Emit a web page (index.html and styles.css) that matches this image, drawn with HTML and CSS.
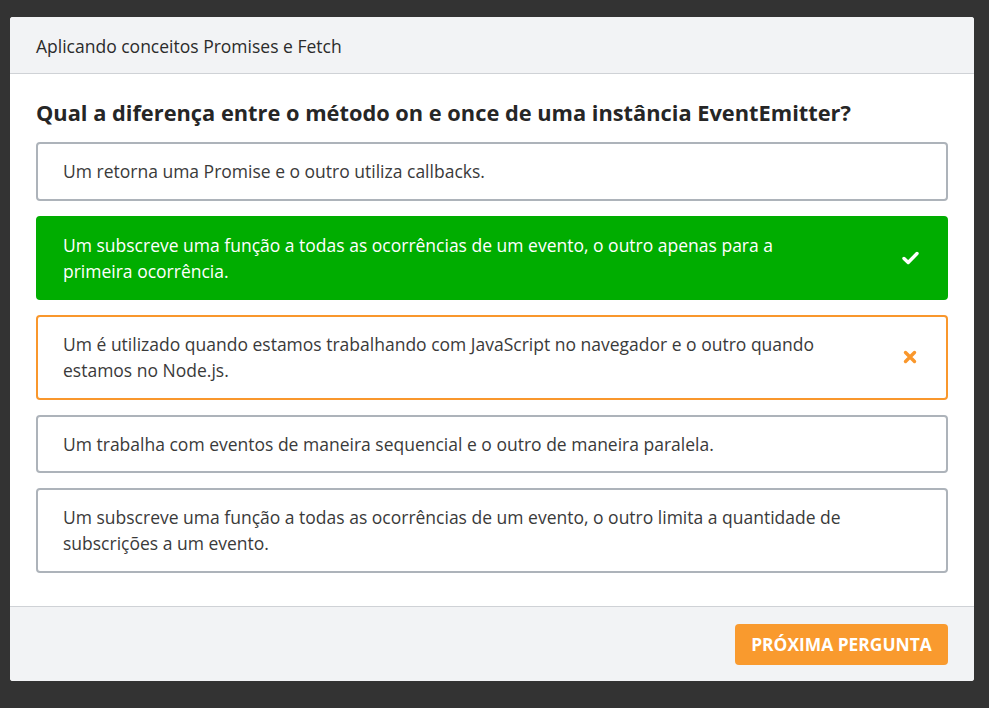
FILE: index.html
```html
<!DOCTYPE html>
<html lang="pt">
<head>
<meta charset="utf-8">
<link rel="stylesheet" href="styles.css">
</head>
<body>
<div class="modal">
  <div class="modal-header">Aplicando conceitos Promises e Fetch</div>
  <div class="modal-body">
    <h1 class="question">Qual a diferença entre o método on e once de uma instância EventEmitter?</h1>
    <div class="options">
      <div class="option"><span class="option-text">Um retorna uma Promise e o outro utiliza callbacks.</span></div>
      <div class="option correct"><span class="option-text">Um subscreve uma função a todas as ocorrências de um evento, o outro apenas para a primeira ocorrência.</span>
        <span class="icon"><svg width="17" height="14" viewBox="0 0 17 14"><path d="M2 7.5 L6.2 11.5 L15 2.5" fill="none" stroke="#fff" stroke-width="3.4" stroke-linecap="round" stroke-linejoin="round"/></svg></span>
      </div>
      <div class="option wrong"><span class="option-text">Um é utilizado quando estamos trabalhando com JavaScript no navegador e o outro quando estamos no Node.js.</span>
        <span class="icon"><svg width="14" height="14" viewBox="0 0 14 14"><path d="M2.5 2.5 L11.5 11.5 M11.5 2.5 L2.5 11.5" fill="none" stroke="#f9972c" stroke-width="3.4" stroke-linecap="round"/></svg></span>
      </div>
      <div class="option"><span class="option-text">Um trabalha com eventos de maneira sequencial e o outro de maneira paralela.</span></div>
      <div class="option"><span class="option-text">Um subscreve uma função a todas as ocorrências de um evento, o outro limita a quantidade de subscrições a um evento.</span></div>
    </div>
  </div>
  <div class="modal-footer">
    <button class="next-btn">PRÓXIMA PERGUNTA</button>
  </div>
</div>
</body>
</html>
```

FILE: styles.css
```css
html, body {
  margin: 0;
  padding: 0;
  background: #333333;
  height: 100%;
}
body {
  padding: 17px 15px 0 10px;
  box-sizing: border-box;
  font-family: "Open Sans", "Noto Sans", sans-serif;
}
.modal {
  width: 964px;
  background: #ffffff;
  border-radius: 3px;
  overflow: hidden;
}
.modal-header {
  height: 57px;
  box-sizing: border-box;
  background: #f2f3f5;
  border-bottom: 1px solid #cfd2d6;
  padding: 2px 26px 0 26px;
  display: flex;
  align-items: center;
  font-size: 17.5px;
  color: #2b2b2b;
}
.modal-body {
  padding: 24px 26px 33px 26px;
}
.question {
  margin: 0 0 14px 0;
  font-size: 21.8px;
  font-weight: 700;
  color: #262626;
  line-height: 30px;
}
.options {
  display: flex;
  flex-direction: column;
  gap: 15px;
}
.option {
  display: flex;
  align-items: center;
  border: 2px solid #adb3ba;
  border-radius: 4px;
  padding: 14px 26px 14.5px 25px;
  font-size: 17.5px;
  line-height: 26px;
  color: #3a3a3a;
}
.option-text {
  flex: 1;
  padding-right: 55px;
}
.option.correct {
  background: #00ad00;
  border-color: #00ad00;
  color: #ffffff;
}
.option.wrong {
  border-color: #f9972c;
}
.icon {
  width: 20px;
  display: flex;
  justify-content: center;
  align-items: center;
}
.modal-footer {
  background: #f2f3f5;
  border-top: 1px solid #cfd2d6;
  padding: 17px 26px 16px 26px;
  display: flex;
  justify-content: flex-end;
}
.next-btn {
  background: #f99a2e;
  color: #ffffff;
  border: none;
  border-radius: 4px;
  height: 41px;
  width: 213px;
  font-family: "Open Sans", "Noto Sans", sans-serif;
  font-size: 17.4px;
  font-weight: 700;
  padding: 0;
}
```
